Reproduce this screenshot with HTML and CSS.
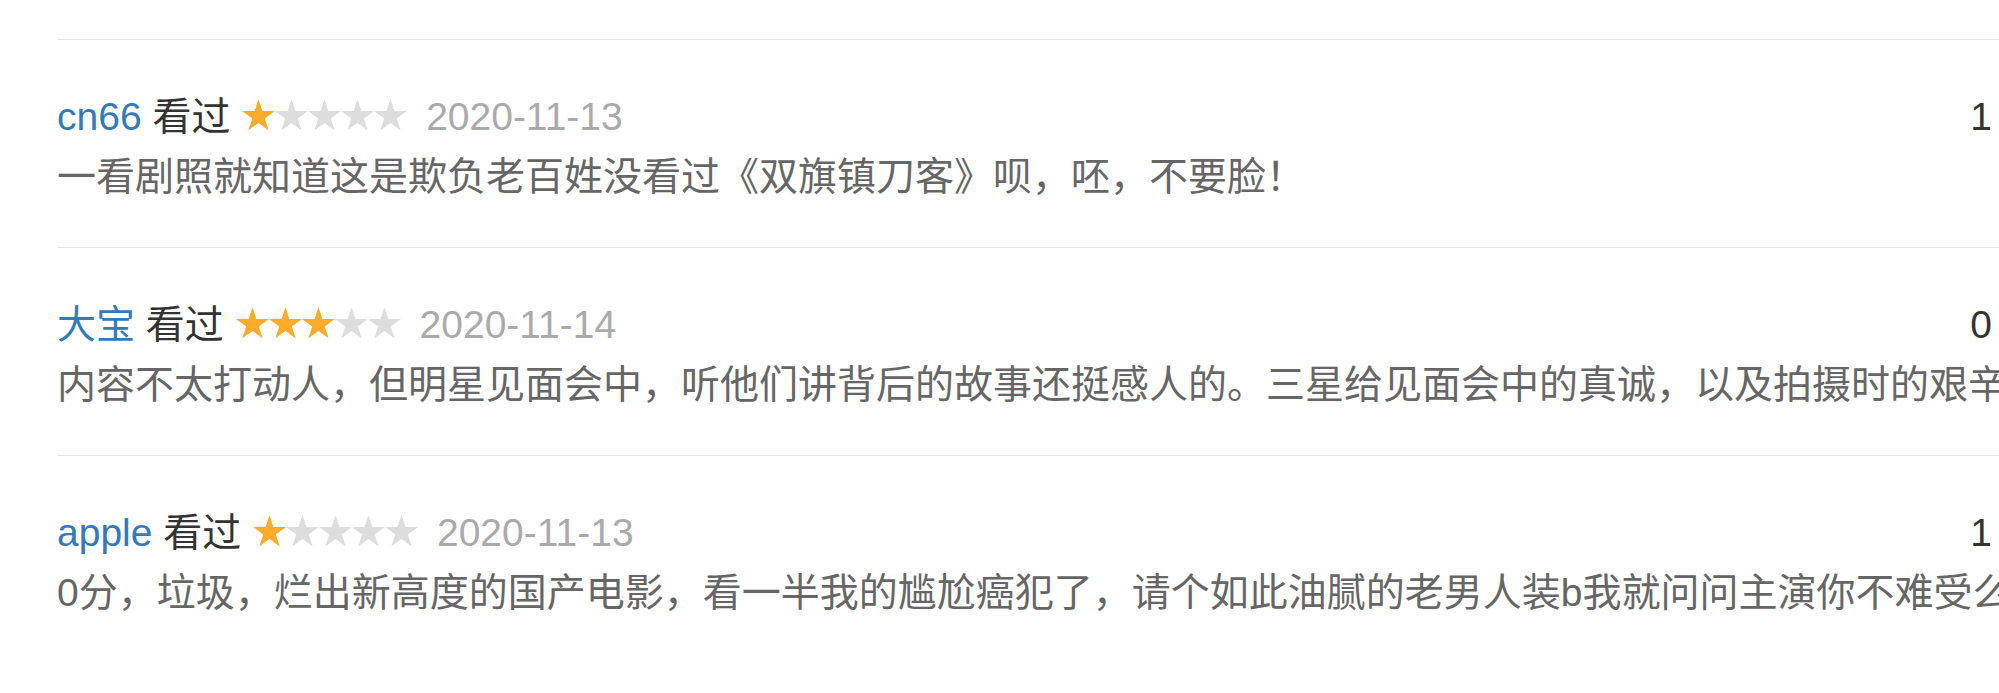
FILE: index.html
```html
<!DOCTYPE html>
<html lang="zh-CN">
<head>
<meta charset="utf-8">
<title>短评</title>
<link rel="stylesheet" href="styles.css">
</head>
<body>
<svg class="defs" width="0" height="0" aria-hidden="true">
  <symbol id="star" viewBox="0 0 95.1 90.45">
    <polygon points="47.55,0 58.78,34.55 95.1,34.55 65.72,55.9 76.94,90.45 47.55,69.1 18.16,90.45 29.38,55.9 0,34.55 36.32,34.55"/>
  </symbol>
</svg>
<div class="list">
  <div class="review">
    <div class="head">
      <div class="meta"><a class="user">cn66</a> <span class="seen">看过</span> <span class="stars"><svg class="star on"><use href="#star"/></svg><svg class="star"><use href="#star"/></svg><svg class="star"><use href="#star"/></svg><svg class="star"><use href="#star"/></svg><svg class="star"><use href="#star"/></svg></span> <span class="date">2020-11-13</span></div>
      <span class="votes">1</span>
    </div>
    <p class="text">一看剧照就知道这是欺负老百姓没看过《双旗镇刀客》呗，呸，不要脸！</p>
  </div>
  <div class="review">
    <div class="head">
      <div class="meta"><a class="user">大宝</a> <span class="seen">看过</span> <span class="stars"><svg class="star on"><use href="#star"/></svg><svg class="star on"><use href="#star"/></svg><svg class="star on"><use href="#star"/></svg><svg class="star"><use href="#star"/></svg><svg class="star"><use href="#star"/></svg></span> <span class="date">2020-11-14</span></div>
      <span class="votes">0</span>
    </div>
    <p class="text">内容不太打动人，但明星见面会中，听他们讲背后的故事还挺感人的。三星给见面会中的真诚，以及拍摄时的艰辛。</p>
  </div>
  <div class="review">
    <div class="head">
      <div class="meta"><a class="user">apple</a> <span class="seen">看过</span> <span class="stars"><svg class="star on"><use href="#star"/></svg><svg class="star"><use href="#star"/></svg><svg class="star"><use href="#star"/></svg><svg class="star"><use href="#star"/></svg><svg class="star"><use href="#star"/></svg></span> <span class="date">2020-11-13</span></div>
      <span class="votes">1</span>
    </div>
    <p class="text">0分，垃圾，烂出新高度的国产电影，看一半我的尴尬癌犯了，请个如此油腻的老男人装b我就问问主演你不难受么？</p>
  </div>
</div>
</body>
</html>
```

FILE: styles.css
```css
html, body {
  margin: 0;
  padding: 0;
  background: #fff;
  overflow: hidden;
}

body {
  padding-top: 39px;
  font-family: "Liberation Sans", Arial, "Noto Sans CJK SC", sans-serif;
  font-size: 39px;
  line-height: 57px;
  color: #333;
}

.defs {
  position: absolute;
  width: 0;
  height: 0;
  overflow: hidden;
}

.list {
  margin-left: 57px;
}

.review {
  border-top: 1px solid #e5e5e5;
  padding: 48px 0 42px;
  overflow: hidden;
}

.head {
  display: flex;
  justify-content: space-between;
  align-items: baseline;
  padding-right: 7px;
}

.meta {
  white-space: nowrap;
}

.user {
  color: #337ab7;
  text-decoration: none;
}

.seen {
  color: #333;
}

.stars {
  display: inline-flex;
  margin: 0 8px 0 1px;
}

.star {
  width: 33px;
  height: 31.4px;
  fill: #dddddd;
}

.star.on {
  fill: #ffac2d;
}

.date {
  color: #aaaaaa;
}

.votes {
  color: #333;
}

.text {
  margin: 3px 0 0;
  color: #666;
  white-space: nowrap;
}
```
